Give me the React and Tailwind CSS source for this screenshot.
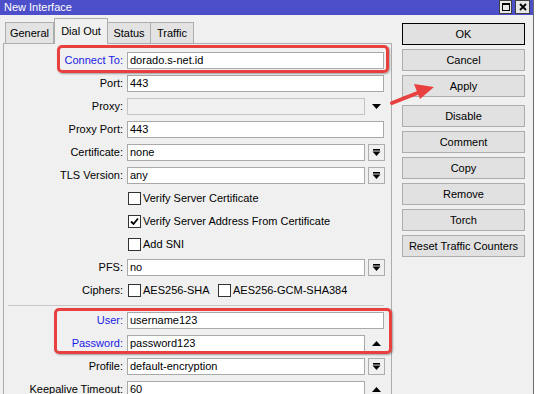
import React from "react";

const F = { fontFamily: '"Liberation Sans", Arial, sans-serif' };

function ComboBtn() {
  return (
    <div className="w-[17px] h-[17px] border border-[#adadad] bg-[#f0f0f0] flex items-center justify-center ml-[3px] shrink-0">
      <svg width="9" height="9" viewBox="0 0 9 9">
        <rect x="1" y="1" width="7" height="1.6" fill="#000" />
        <polygon points="0.5,3.6 8.5,3.6 4.5,8" fill="#000" />
      </svg>
    </div>
  );
}

function Tri({ up }) {
  return (
    <div className="w-[17px] h-[17px] flex items-center justify-center ml-[3px] shrink-0">
      <svg width="9" height="5" viewBox="0 0 9 5">
        {up ? (
          <polygon points="0,5 9,5 4.5,0" fill="#000" />
        ) : (
          <polygon points="0,0 9,0 4.5,5" fill="#000" />
        )}
      </svg>
    </div>
  );
}

function Row({ label, blue, children }) {
  return (
    <div className="flex items-center h-[17px] mb-[6px]">
      <div
        className={
          "w-[119px] text-right text-[11px] leading-none " +
          (blue ? "text-[#1a1ae6]" : "text-black")
        }
      >
        {label}
      </div>
      <div className="ml-[4px] flex items-center">{children}</div>
    </div>
  );
}

function Input({ value, w, disabled }) {
  return (
    <div
      className={
        "h-[17px] border border-[#a9a9a9] flex items-center pl-[2px] text-[11px] leading-none text-black " +
        (disabled ? "bg-[#f0f0f0] border-[#c4c4c4]" : "bg-white")
      }
      style={{ width: w }}
    >
      {value}
    </div>
  );
}

function Check({ checked }) {
  return (
    <div className="w-[13px] h-[13px] border border-[#333] bg-white flex items-center justify-center shrink-0">
      {checked && (
        <svg width="9" height="9" viewBox="0 0 9 9">
          <polyline points="1,4.5 3.5,7 8,1.5" fill="none" stroke="#000" strokeWidth="1.8" />
        </svg>
      )}
    </div>
  );
}

function CheckRow({ label, checked }) {
  return (
    <div className="flex items-center h-[17px] mb-[6px] pl-[124px]">
      <Check checked={checked} />
      <span className="ml-[2px] text-[11px] leading-none text-black">{label}</span>
    </div>
  );
}

function Btn({ children, def, mt }) {
  return (
    <div
      className={
        "h-[22px] w-[123px] flex items-center justify-center text-[11px] leading-none text-black bg-[#e1e1e1] border " +
        (def ? "border-black" : "border-[#adadad]") +
        " " +
        (mt || "mt-[4px]")
      }
    >
      {children}
    </div>
  );
}

export default function App() {
  return (
    <div className="relative w-[537px] h-[394px] overflow-hidden bg-white" style={F}>
      <div className="flex flex-col w-[534px] h-[394px] bg-[#f0f0f0] border-r border-[#6e6e6e]">
        {/* title bar */}
        <div className="h-[15px] bg-[#4d4fca] flex items-center justify-between pl-[4px] pr-[3px] shrink-0">
          <span className="text-white text-[11px] leading-none">New Interface</span>
          <div className="flex items-start h-[15px] gap-[3px]">
            <div className="w-[13px] h-[14px] bg-[#e6e6e6] border border-[#404040] flex items-center justify-center">
              <div className="w-[8px] h-[8px] border border-black border-t-2" />
            </div>
            <div className="w-[15px] h-[14px] bg-[#e6e6e6] border border-[#404040] flex items-center justify-center">
              <svg width="8" height="8" viewBox="0 0 8 8">
                <path d="M1 1 L7 7 M7 1 L1 7" stroke="#000" strokeWidth="1.8" />
              </svg>
            </div>
          </div>
        </div>

        <div className="flex flex-1">
          {/* left column */}
          <div className="w-[392px] flex flex-col">
            <div className="h-[28px] flex items-end pl-[5px] shrink-0">
              <div className="h-[21px] w-[49px] border border-b-0 border-[#adadad] bg-[#e3e3e3] flex items-center justify-center text-[11px] leading-none">
                General
              </div>
              <div className="h-[26px] w-[54px] border border-b-0 border-[#adadad] bg-[#f0f0f0] flex items-start pt-[7px] justify-center text-[11px] leading-none relative z-10 -mb-px">
                Dial Out
              </div>
              <div className="h-[21px] w-[43px] border border-b-0 border-l-0 border-[#adadad] bg-[#e3e3e3] flex items-center justify-center text-[11px] leading-none">
                Status
              </div>
              <div className="h-[21px] w-[43px] border border-b-0 border-l-0 border-[#adadad] bg-[#e3e3e3] flex items-center justify-center text-[11px] leading-none">
                Traffic
              </div>
            </div>
            <div className="ml-[3px] flex-1 border-l border-t border-r border-[#adadad] bg-[#f0f0f0] pt-[8px]">
              <Row label="Connect To:" blue>
                <Input value="dorado.s-net.id" w={257} />
              </Row>
              <Row label="Port:">
                <Input value="443" w={257} />
              </Row>
              <Row label="Proxy:">
                <Input value="" w={238} disabled />
                <Tri />
              </Row>
              <Row label="Proxy Port:">
                <Input value="443" w={257} />
              </Row>
              <Row label="Certificate:">
                <Input value="none" w={238} />
                <ComboBtn />
              </Row>
              <Row label="TLS Version:">
                <Input value="any" w={238} />
                <ComboBtn />
              </Row>
              <CheckRow label="Verify Server Certificate" />
              <CheckRow label="Verify Server Address From Certificate" checked />
              <CheckRow label="Add SNI" />
              <Row label="PFS:">
                <Input value="no" w={238} />
                <ComboBtn />
              </Row>
              <Row label="Ciphers:">
                <div className="flex items-center pl-[1px]">
                  <Check />
                  <span className="ml-[2px] text-[11px] leading-none w-[75px]">AES256-SHA</span>
                  <Check />
                  <span className="ml-[2px] text-[11px] leading-none">AES256-GCM-SHA384</span>
                </div>
              </Row>
              <div className="ml-[4px] w-[376px] h-px bg-[#c8c8c8] mb-[6px]" />
              <Row label="User:" blue>
                <Input value="username123" w={257} />
              </Row>
              <Row label="Password:" blue>
                <Input value="password123" w={238} />
                <Tri up />
              </Row>
              <Row label="Profile:">
                <Input value="default-encryption" w={238} />
                <ComboBtn />
              </Row>
              <Row label="Keepalive Timeout:">
                <Input value="60" w={238} />
                <Tri up />
              </Row>
            </div>
          </div>

          {/* buttons */}
          <div className="ml-[10px] pt-[8px] flex flex-col">
            <Btn def mt="mt-0">OK</Btn>
            <Btn>Cancel</Btn>
            <Btn>Apply</Btn>
            <Btn mt="mt-[8px]">Disable</Btn>
            <Btn>Comment</Btn>
            <Btn>Copy</Btn>
            <Btn>Remove</Btn>
            <Btn>Torch</Btn>
            <Btn>Reset Traffic Counters</Btn>
          </div>
        </div>
      </div>

      {/* red highlight boxes */}
      <div className="absolute left-[57px] top-[45px] w-[332px] h-[28px] border-[3px] border-[#e8403f] rounded-[5px] shadow-[1px_1px_2px_rgba(0,0,0,0.35)]" />
      <div className="absolute left-[54px] top-[308px] w-[338px] h-[46px] border-[3px] border-[#e8403f] rounded-[5px] shadow-[1px_1px_2px_rgba(0,0,0,0.35)]" />

      {/* red arrow */}
      <svg className="absolute left-0 top-0" width="537" height="394" viewBox="0 0 537 394">
        <line x1="392" y1="103" x2="420" y2="92" stroke="#e8403f" strokeWidth="4" strokeLinecap="round" />
        <polygon points="434,87 414,84 420,99" fill="#e8403f" />
      </svg>
    </div>
  );
}
